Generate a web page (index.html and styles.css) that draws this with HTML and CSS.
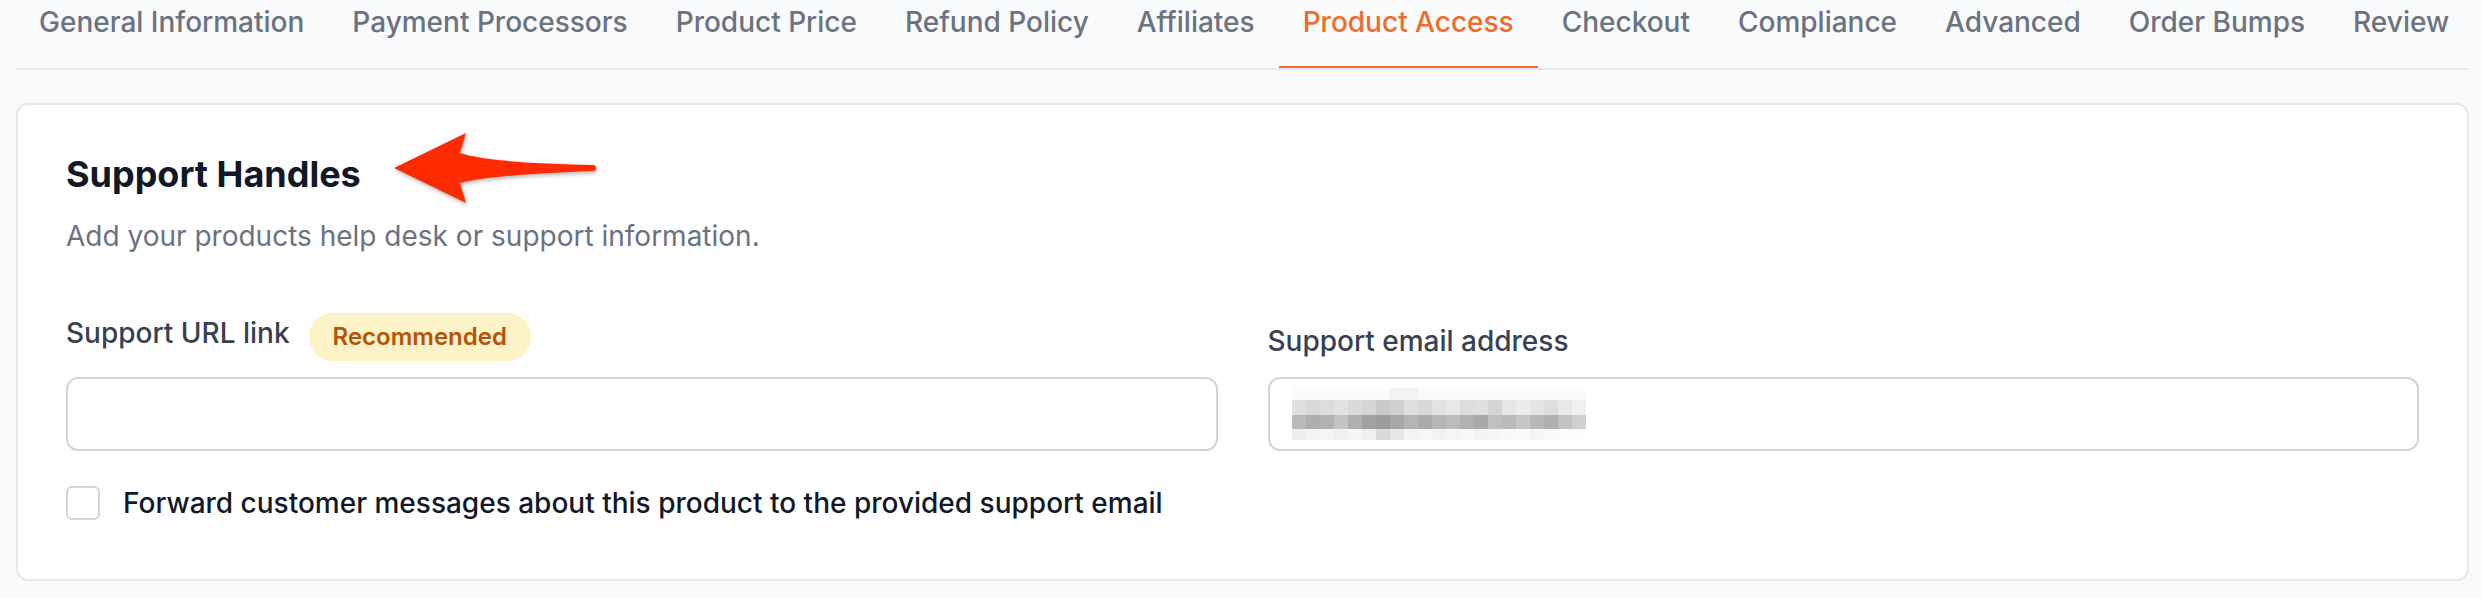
FILE: index.html
```html
<!DOCTYPE html>
<html lang="en">
    <head>
        <meta charset="UTF-8">
        <meta name="viewport" content="width=device-width, initial-scale=1.0">
        <title>Product Access</title>
        <link rel="stylesheet" href="styles.css">
    </head>
    <body>
        <div class="page">
            <nav class="tabs">
                <a class="tab">General Information</a>
                <a class="tab">Payment Processors</a>
                <a class="tab">Product Price</a>
                <a class="tab">Refund Policy</a>
                <a class="tab">Affiliates</a>
                <a class="tab active">Product Access</a>
                <a class="tab">Checkout</a>
                <a class="tab">Compliance</a>
                <a class="tab">Advanced</a>
                <a class="tab">Order Bumps</a>
                <a class="tab">Review</a>
            </nav>

            <div class="card">
                <h2 class="card-title">Support Handles</h2>
                <p class="card-text">Add your products help desk or support information.</p>

                <div class="fields">
                    <div class="field">
                        <div class="label-row">
                            <label class="label">Support URL link</label>
                            <span class="badge">Recommended</span>
                        </div>
                        <div class="input"></div>
                    </div>
                    <div class="field">
                        <div class="label-row">
                            <label class="label">Support email address</label>
                        </div>
                        <div class="input">
                            <div class="redacted"></div>
                        </div>
                    </div>
                </div>

                <label class="check-row">
                    <input type="checkbox" class="checkbox">
                    <span>Forward customer messages about this product to the provided support email</span>
                </label>
            </div>

            <!-- annotation arrow pointing at the heading -->
            <svg class="arrow" width="230" height="90" viewBox="0 0 230 90">
                <path d="M14 43 L86 8 L80 28 Q110 38 213 40 A3 3 0 0 1 213 46 Q110 50 80 58 L86 78 Z" fill="#fe2a00"/>
            </svg>
        </div>
    </body>
</html>
```

FILE: styles.css
```css
body {
    margin: 0;
    background-color: #f9fafb;
    font-family: Inter, "Noto Sans", sans-serif;
    color: #111827;
}

.page {
    position: relative;
    padding: 0 13px 17px 15px;
}

.tabs {
    display: flex;
    justify-content: space-between;
    border-bottom: 2px solid #e5e7eb;
}

.tab {
    padding: 2px 24px 24px;
    font-size: 28px;
    line-height: 40px;
    font-weight: 500;
    color: #6b7280;
    white-space: nowrap;
    border-bottom: 2px solid transparent;
    cursor: pointer;
}

.tab.active {
    color: #ee6d2c;
    border-bottom-color: #ee6d2c;
}

.card {
    margin-top: 33px;
    margin-left: 1px;
    background: #fff;
    border: 2px solid #e5e7eb;
    border-radius: 12px;
    padding: 45px 48px 56px;
}

.card-title {
    margin: 0;
    font-size: 36px;
    line-height: 48px;
    font-weight: 700;
    color: #111827;
}

.card-text {
    margin: 18px 0 0;
    font-size: 28px;
    line-height: 40px;
    color: #6b7280;
}

.fields {
    display: grid;
    grid-template-columns: 1fr 1fr;
    column-gap: 50px;
    margin-top: 57px;
}

.field {
    display: flex;
    flex-direction: column;
    justify-content: flex-end;
}

.label-row {
    display: flex;
    align-items: flex-start;
    gap: 19px;
}

.label {
    font-size: 28px;
    line-height: 40px;
    font-weight: 500;
    color: #374151;
}

.badge {
    padding: 8px 24px;
    border-radius: 999px;
    background: #fef3c7;
    color: #b45309;
    font-size: 24px;
    line-height: 32px;
    font-weight: 600;
}

.input {
    display: flex;
    align-items: center;
    box-sizing: border-box;
    height: 74px;
    margin-top: 16px;
    padding: 0 22px;
    border: 2px solid #d1d5db;
    border-radius: 12px;
    background: #fff;
}

/* pixelated email address */
.redacted {
    width: 294px;
    height: 52px;
    background-repeat: no-repeat;
    background-size: 294px 12px, 294px 15px, 294px 14px, 294px 11px;
    background-position: 0 0, 0 12px, 0 27px, 0 41px;
    background-image:
        linear-gradient(to right, #fbfbfb 0 98px, #f2f2f2 98px 126px, #fafafa 126px 294px),
        linear-gradient(to right, #e0e0e0 0 14px, #d9d9d9 14px 28px, #dcdcdc 28px 42px, #e2e2e2 42px 56px, #dadada 56px 70px, #d6d6d6 70px 84px, #c9c9c9 84px 98px, #cfcfcf 98px 112px, #dedede 112px 126px, #d8d8d8 126px 140px, #e3e3e3 140px 154px, #e8e8e8 154px 168px, #dddddd 168px 182px, #e0e0e0 182px 196px, #d5d5d5 196px 210px, #e6e6e6 210px 224px, #ececec 224px 238px, #e4e4e4 238px 252px, #dedede 252px 266px, #e8e8e8 266px 280px, #f0f0f0 280px 294px),
        linear-gradient(to right, #b9b9b9 0 14px, #aeaeae 14px 28px, #b3b3b3 28px 42px, #c4c4c4 42px 56px, #b0b0b0 56px 70px, #a2a2a2 70px 84px, #9c9c9c 84px 98px, #a8a8a8 98px 112px, #b4b4b4 112px 126px, #aaaaaa 126px 140px, #b6b6b6 140px 154px, #bcbcbc 154px 168px, #b1b1b1 168px 182px, #a9a9a9 182px 196px, #c0c0c0 196px 210px, #bababa 210px 224px, #c6c6c6 224px 238px, #b8b8b8 238px 252px, #b0b0b0 252px 266px, #c3c3c3 266px 280px, #d0d0d0 280px 294px),
        linear-gradient(to right, #eeeeee 0 14px, #f3f3f3 14px 28px, #f5f5f5 28px 42px, #f1f1f1 42px 56px, #f6f6f6 56px 70px, #f0f0f0 70px 84px, #dadada 84px 98px, #e6e6e6 98px 112px, #f4f4f4 112px 126px, #f7f7f7 126px 140px, #f2f2f2 140px 154px, #f5f5f5 154px 168px, #f8f8f8 168px 182px, #f3f3f3 182px 196px, #f6f6f6 196px 210px, #f9f9f9 210px 224px, #fafafa 224px 238px, #f5f5f5 238px 252px, #fbfbfb 252px 266px, #fdfdfd 266px 280px, #fefefe 280px 294px);
}

.check-row {
    display: flex;
    align-items: center;
    gap: 23px;
    margin-top: 32px;
    font-size: 28px;
    line-height: 40px;
    font-weight: 500;
    color: #111827;
}

.checkbox {
    appearance: none;
    width: 34px;
    height: 34px;
    margin: 0;
    border: 2px solid #d1d5db;
    border-radius: 6px;
    background: #fff;
}

.arrow {
    position: absolute;
    left: 380px;
    top: 125px;
    filter: drop-shadow(1px 2px 2px rgba(0, 0, 0, 0.3));
}
```
